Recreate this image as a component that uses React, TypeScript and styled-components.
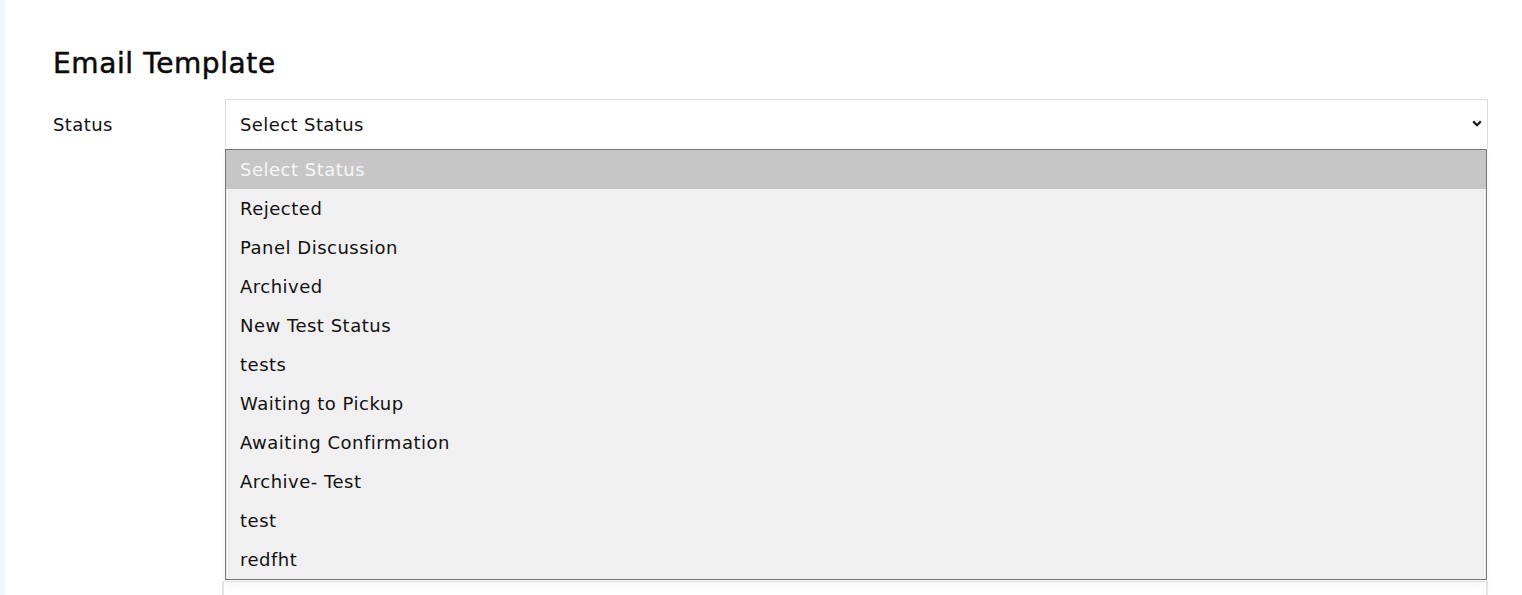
import React from "react";
import styled, { createGlobalStyle } from "styled-components";

const Global = createGlobalStyle`
  html, body {
    margin: 0;
    padding: 0;
    height: 100%;
    overflow: hidden;
    background: #ffffff;
  }
  body {
    font-family: "DejaVu Sans", "Liberation Sans", sans-serif;
    color: #111111;
  }
`;

const Page = styled.div`
  display: flex;
  height: 100vh;
  overflow: hidden;
`;

const SideStrip = styled.div`
  width: 5px;
  flex: 0 0 5px;
  background: #f2f6fd;
`;

const Main = styled.main`
  flex: 1;
  padding: 48px 34px 0 48px;
  min-width: 0;
`;

const Title = styled.h1`
  margin: 0;
  font-size: 28px;
  line-height: 32px;
  font-weight: 500;
  color: #0b0b0b;
  -webkit-text-stroke: 0.5px #0b0b0b;
  letter-spacing: 0.6px;
`;

const Form = styled.div`
  margin-top: 19px;
  display: flex;
  flex-direction: column;
  gap: 432px;
`;

const Row = styled.div`
  display: grid;
  grid-template-columns: 172px 1fr;
  align-items: center;
`;

const Label = styled.label`
  font-size: 18px;
  line-height: 21px;
  letter-spacing: 0.4px;
  color: #111111;
`;

const SelectWrap = styled.div`
  position: relative;
`;

const SelectBox = styled.div`
  box-sizing: border-box;
  height: 50px;
  border: 1px solid #dcdcdc;
  border-bottom-color: #ffffff;
  background: #ffffff;
  display: flex;
  align-items: center;
  justify-content: space-between;
  padding: 0 5px 0 14px;
  font-size: 18px;
  line-height: 21px;
  letter-spacing: 0.4px;
  color: #111111;
`;

const Chevron = styled.svg`
  width: 10px;
  height: 7px;
  margin-bottom: 2px;
`;

const OptionList = styled.ul`
  position: absolute;
  top: 100%;
  left: 0;
  right: 1px;
  margin: 0;
  padding: 0;
  list-style: none;
  background: #f0f0f0;
  border: 1px solid #767676;
  box-shadow: 0 5px 9px rgba(0, 0, 0, 0.06);
  z-index: 2;
`;

const OptionItem = styled.li<{ $active?: boolean }>`
  height: 39px;
  display: flex;
  align-items: center;
  padding-left: 14px;
  font-size: 18px;
  line-height: 21px;
  letter-spacing: 0.5px;
  background: ${(p) => (p.$active ? "#c6c6c6" : "transparent")};
  color: ${(p) => (p.$active ? "#f7f7f7" : "#111111")};
`;

const EditorBox = styled.div`
  margin-left: -3px;
  height: 300px;
  border-left: 2px solid #e3e3e9;
  border-right: 2px solid #e6e6ec;
  border-top: 1px solid #ececf0;
  background: #ffffff;
`;

const options = [
  "Select Status",
  "Rejected",
  "Panel Discussion",
  "Archived",
  "New Test Status",
  "tests",
  "Waiting to Pickup",
  "Awaiting Confirmation",
  "Archive- Test",
  "test",
  "redfht",
];

export default function App() {
  return (
    <>
      <Global />
      <Page>
        <SideStrip />
        <Main>
          <Title>Email Template</Title>
          <Form>
            <Row>
              <Label>Status</Label>
              <SelectWrap>
                <SelectBox>
                  <span>Select Status</span>
                  <Chevron viewBox="0 0 10 7" aria-hidden>
                    <path
                      d="M1.2 1.4 L5 5.2 L8.8 1.4"
                      fill="none"
                      stroke="#1a1a1a"
                      strokeWidth="2.2"
                      strokeLinecap="butt"
                      strokeLinejoin="miter"
                    />
                  </Chevron>
                </SelectBox>
                <OptionList>
                  {options.map((o, i) => (
                    <OptionItem key={o} $active={i === 0}>
                      {o}
                    </OptionItem>
                  ))}
                </OptionList>
              </SelectWrap>
            </Row>
            <Row>
              <span />
              <EditorBox />
            </Row>
          </Form>
        </Main>
      </Page>
    </>
  );
}
